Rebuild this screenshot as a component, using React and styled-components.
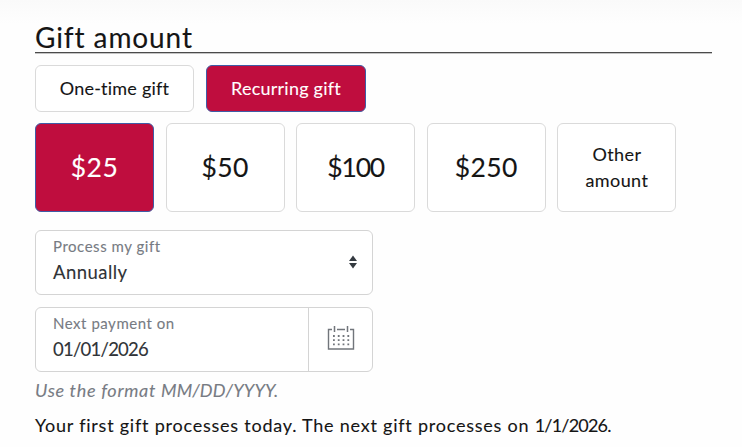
import React from "react";
import styled, { createGlobalStyle } from "styled-components";

const amounts = [
  { label: "$25", selected: true, size: 26.5, space: 0.4 },
  { label: "$50", size: 26.5, space: 0.4 },
  { label: "$100", size: 26.5, space: -1.2 },
  { label: "$250", size: 26.5, space: 0.4 },
];

const App = () => {
  return (
    <>
      <GlobalStyle />
      <Page>
        <Heading>Gift amount</Heading>
        <TypeRow>
          <TypeButton type="button">One-time gift</TypeButton>
          <TypeButton type="button" $selected>
            Recurring gift
          </TypeButton>
        </TypeRow>
        <AmountRow>
          {amounts.map((item) => (
            <AmountButton
              key={item.label}
              type="button"
              $selected={item.selected}
              $size={item.size}
              $space={item.space}
            >
              {item.label}
            </AmountButton>
          ))}
          <AmountButton type="button" $size={18} $space={0.4}>
            Other
            <br />
            amount
          </AmountButton>
        </AmountRow>
        <Field>
          <FieldText>
            <Label>Process my gift</Label>
            <Value $space={0.45}>Annually</Value>
          </FieldText>
          <SelectArrows />
        </Field>
        <Field $second>
          <FieldText>
            <Label>Next payment on</Label>
            <Value $space={-0.75}>01/01/2026</Value>
          </FieldText>
          <DateButton type="button" aria-label="Choose date">
            <CalendarIcon />
          </DateButton>
        </Field>
        <Hint>
          Use the format <Tight $space={0.1}>MM/DD/YYYY.</Tight>
        </Hint>
        <Note>
          Your first gift processes today. The next gift processes on{" "}
          <Tight $space={-0.8}>1/1/2026.</Tight>
        </Note>
      </Page>
    </>
  );
};

const SelectArrows = () => (
  <Arrows width="8" height="14" viewBox="0 0 8 14" fill="#343a40">
    <path d="M4 0.5 8 6H0z" />
    <path d="M0 8h8L4 13.5z" />
  </Arrows>
);

const CalendarIcon = () => (
  <Calendar width="28" height="26" viewBox="0 0 28 26" fill="none" stroke="#71757b">
    <path d="M5 4.5H1.5v19.5h25V4.5H23M10 4.5h8" strokeWidth="1.4" />
    <path d="M7.5 1v6M20.5 1v6" strokeWidth="1.5" />
    {[11, 15.2, 19.4].map((y) => (
      <path key={y} d={`M6 ${y}h18`} strokeWidth="1.8" strokeDasharray="1.8 3" />
    ))}
  </Calendar>
);

const GlobalStyle = createGlobalStyle`
  * {
    box-sizing: border-box;
  }

  body {
    margin: 0;
    background: #fefefe;
    color: #151515;
    font-family: Lato, "Noto Sans", sans-serif;
    -webkit-text-stroke: 0.1px;
  }

  button {
    margin: 0;
    padding: 0;
    font-family: inherit;
  }
`;

const Page = styled.main`
  height: 447px;
  padding: 21px 30.5px 0 35px;
  overflow: hidden;
  background: linear-gradient(#fafafa, #fefefe 24px);
`;

const Heading = styled.h1`
  height: 32px;
  margin: 0;
  border-bottom: 1px solid #4b4b4b;
  box-shadow: 0 1px 0 #c4c4c4;
  font-size: 28px;
  font-weight: 400;
  line-height: 32px;
  letter-spacing: 0.9px;
  white-space: nowrap;
`;

const TypeRow = styled.div`
  display: flex;
  gap: 12px;
  margin-top: 11.5px;
`;

const TypeButton = styled.button`
  width: ${(props) => (props.$selected ? 160 : 159)}px;
  height: 47px;
  border: 1px solid ${(props) => (props.$selected ? "#3f5ca6" : "#dadada")};
  border-radius: 6px;
  background: ${(props) => (props.$selected ? "#bf0d3e" : "#fff")};
  color: ${(props) => (props.$selected ? "#fff" : "#151515")};
  font-size: 18px;
  letter-spacing: 0.22px;
`;

const AmountRow = styled.div`
  display: flex;
  gap: 11.6px;
  margin-top: 11.5px;
`;

const AmountButton = styled.button`
  width: 119px;
  height: 89px;
  padding-bottom: 2px;
  border: 1px solid ${(props) => (props.$selected ? "#3f5ca6" : "#dadada")};
  border-radius: 6px;
  background: ${(props) => (props.$selected ? "#bf0d3e" : "#fff")};
  color: ${(props) => (props.$selected ? "#fff" : "#151515")};
  font-size: ${(props) => props.$size}px;
  line-height: 26px;
  letter-spacing: ${(props) => props.$space}px;
`;

const Field = styled.div`
  display: flex;
  align-items: center;
  width: 338px;
  height: ${(props) => (props.$second ? 65 : 64.5)}px;
  margin-top: ${(props) => (props.$second ? 12 : 18)}px;
  border: 1px solid #d4d4d4;
  border-radius: 6px;
  background: #fff;
`;

const FieldText = styled.div`
  flex: 1;
  padding: 0 0 4px 17px;
`;

const Label = styled.div`
  color: #777b83;
  font-size: 15px;
  line-height: 24px;
  letter-spacing: 0.53px;
`;

const Value = styled.div`
  color: #303337;
  font-size: 18.5px;
  line-height: 28px;
  letter-spacing: ${(props) => props.$space}px;
`;

const Arrows = styled.svg`
  margin-right: 15px;
`;

const Calendar = styled.svg`
  margin-bottom: 3px;
`;

const DateButton = styled.button`
  display: flex;
  align-items: center;
  justify-content: center;
  width: 64px;
  height: 100%;
  border: 0;
  border-left: 1px solid #d4d4d4;
  background: transparent;
`;

const Hint = styled.p`
  margin: 5px 0 0;
  color: #777b83;
  font-size: 18px;
  font-style: italic;
  line-height: 26px;
  letter-spacing: 0.7px;
  white-space: nowrap;
`;

const Note = styled.p`
  margin: 9px 0 0;
  font-size: 18px;
  line-height: 26px;
  letter-spacing: 0.77px;
  white-space: nowrap;
`;

const Tight = styled.span`
  letter-spacing: ${(props) => props.$space}px;
`;

export default App;
